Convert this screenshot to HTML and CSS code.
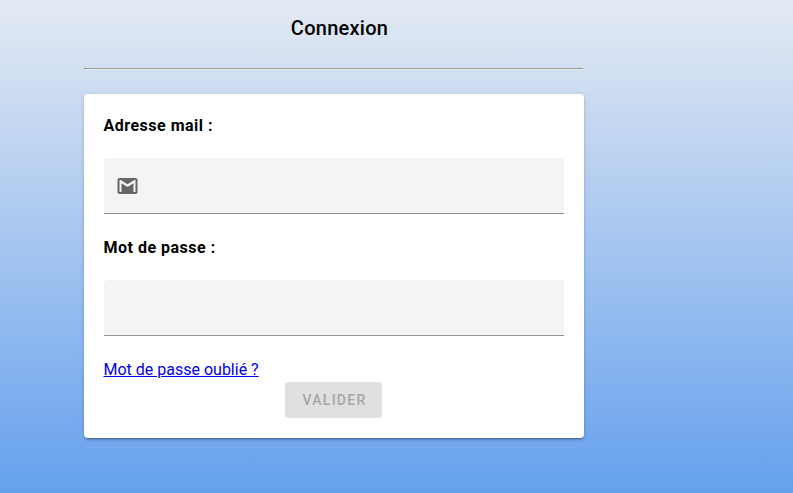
FILE: index.html
```html
<!DOCTYPE html>
<html lang="fr">
<head>
<meta charset="utf-8">
<title>Connexion</title>
<link rel="stylesheet" href="styles.css">
</head>
<body>
<main class="login">
  <h1 class="title">Connexion</h1>
  <hr class="rule">
  <form class="card">
    <label class="label" for="mail">Adresse mail :</label>
    <div class="field">
      <svg class="icon" viewBox="0.5 0 24 24"><path d="M20 18h-2V9.25L12 13 6 9.25V18H4V6h1.2l6.8 4.25L18.8 6H20m0-2H4c-1.11 0-2 .89-2 2v12a2 2 0 0 0 2 2h16a2 2 0 0 0 2-2V6a2 2 0 0 0-2-2z"/></svg>
      <input class="input" id="mail" type="email">
    </div>
    <label class="label" for="password">Mot de passe :</label>
    <div class="field">
      <input class="input" id="password" type="password">
    </div>
    <a class="forgot" href="#">Mot de passe oublié ?</a>
    <button class="submit" type="button" disabled>Valider</button>
  </form>
</main>
</body>
</html>
```
FILE: styles.css
```css
* { box-sizing: border-box; }
body {
  margin: 0;
  height: 493px;
  overflow: hidden;
  font-family: Roboto, sans-serif;
  color: #000;
  background: linear-gradient(#e4eaf3, #65a0ed);
}
.login { width: 500px; margin-left: 83.5px; padding-top: 12px; }
.title {
  margin: 0;
  padding-left: 12px;
  text-align: center;
  font-size: 20px;
  line-height: 32px;
  font-weight: 500;
  letter-spacing: 0.25px;
}
.rule {
  margin: 24px 0;
  border: 1px solid;
  border-color: #9a9a9a #eee #eee #9a9a9a;
}
.card {
  display: flex;
  flex-direction: column;
  height: 344px;
  padding: 20px;
  border-radius: 4px;
  background: #fff;
  box-shadow: 0 3px 1px -2px rgba(0,0,0,.2), 0 2px 2px rgba(0,0,0,.14), 0 1px 5px rgba(0,0,0,.12);
}
.label { font-size: 16px; line-height: 24px; font-weight: 700; letter-spacing: 0.5px; }
.field {
  display: flex;
  align-items: center;
  height: 56px;
  margin: 20px 0 22px;
  padding: 0 12px;
  border-radius: 4px 4px 0 0;
  border-bottom: 1px solid #949494;
  background: #f4f4f4;
}
.icon { flex: none; width: 24px; height: 24px; fill: #666; }
.input { flex: 1; min-width: 0; border: 0; outline: 0; background: transparent; font: inherit; }
.forgot { align-self: flex-start; font-size: 16px; line-height: 24px; color: #00e; }
.submit {
  align-self: center;
  width: 97px;
  height: 36px;
  padding: 0 0 0 2px;
  border: 0;
  border-radius: 4px;
  background: #e0e0e0;
  color: #a6a6a6;
  font: 500 14px Roboto, sans-serif;
  letter-spacing: 1.25px;
  text-transform: uppercase;
}
```
